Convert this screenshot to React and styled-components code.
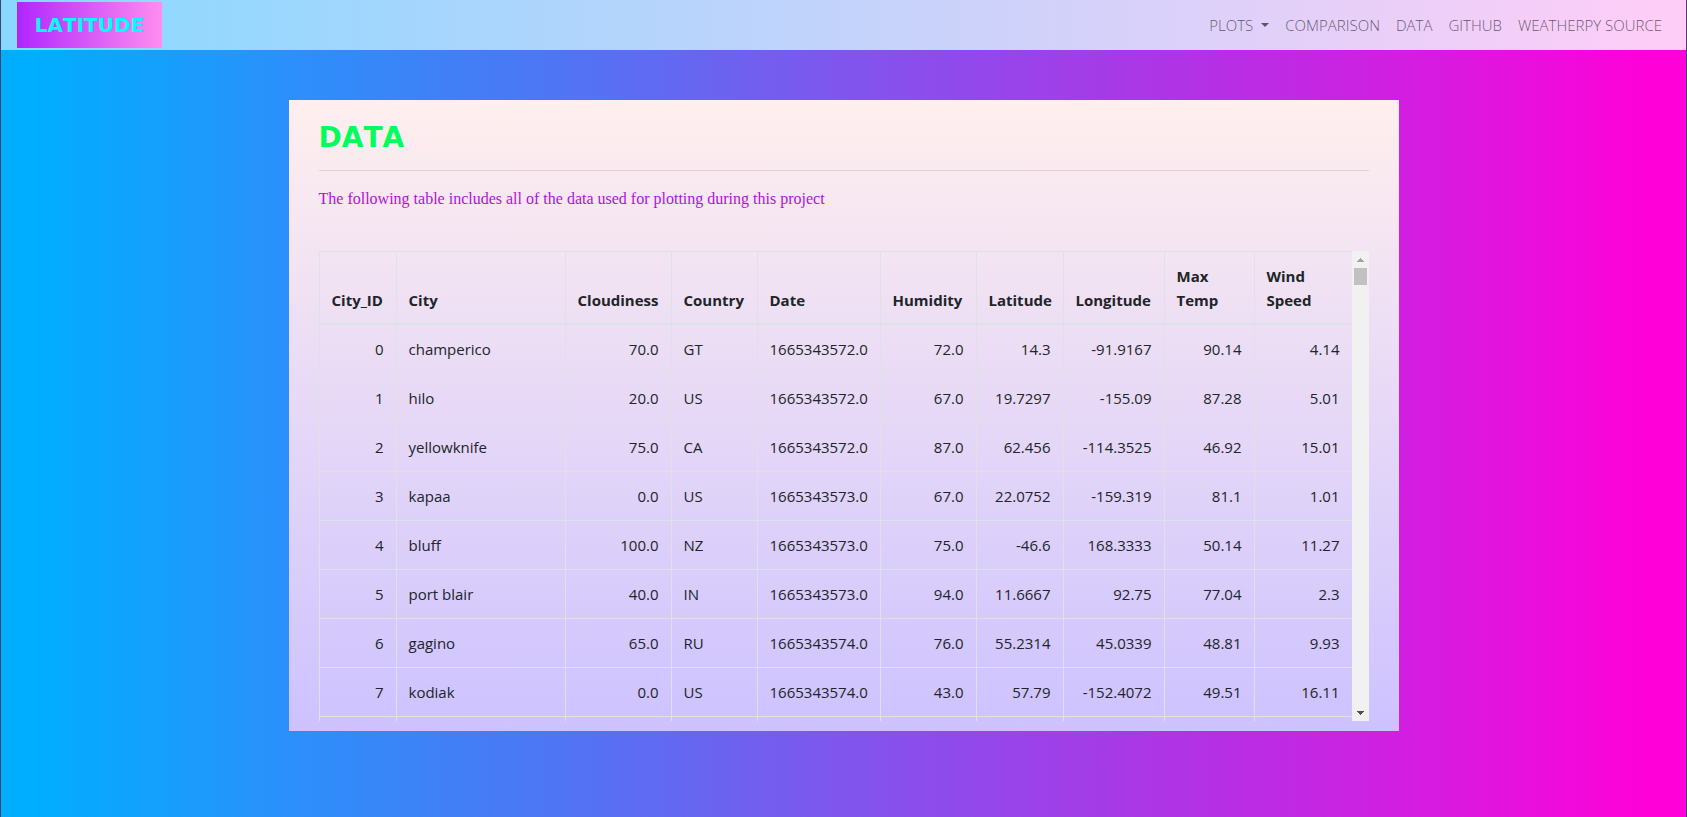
import React, { useRef } from "react";
import styled, { createGlobalStyle } from "styled-components";

const GlobalStyle = createGlobalStyle`
  *, *::before, *::after { box-sizing: border-box; }
  body {
    margin: 0;
    font-family: "Segoe UI", "Open Sans", "Noto Sans", sans-serif;
    font-size: 15px;
    line-height: 24px;
    color: #212529;
  }
`;

const Page = styled.div`
  min-height: 100vh;
  border: solid #45436b;
  border-width: 0 1px;
  background: linear-gradient(to right, #00aeff 2%, #2b90fb 17%, #4f75f4 33%, #8055ee 50%, #b530e5 72%, #d41de0 84%, #ff00d8 98%);
`;

const Navbar = styled.nav`
  display: flex;
  align-items: center;
  justify-content: space-between;
  height: 50px;
  padding: 0 16px;
  background: linear-gradient(to right, #87d9ff, #ffcdf7);
`;

const Brand = styled.a`
  min-width: 145px;
  padding: 8px 16px;
  background: linear-gradient(to right, #b026ff, #ff8df0);
  color: #00fdff;
  font-family: Verdana, "DejaVu Sans", sans-serif;
  font-size: 20px;
  font-weight: 700;
  font-kerning: none;
  line-height: 30px;
  text-align: center;
  text-decoration: none;
`;

const NavList = styled.ul`
  display: flex;
  margin: 0;
  padding: 0;
  list-style: none;
`;

const NavLink = styled.a`
  display: flex;
  align-items: center;
  gap: 8px;
  padding: 8px;
  color: rgba(0, 0, 0, 0.6);
  font-weight: 300;
  text-decoration: none;
`;

const Caret = styled.span`
  border: 4px solid transparent;
  border-top-color: currentColor;
  border-bottom: 0;
`;

const Card = styled.main`
  max-width: 1110px;
  margin: 50px auto 0;
  padding: 16px 30px 10px;
  background: linear-gradient(#ffefee, #cdc2ff);
`;

const Title = styled.h1`
  margin: 0;
  padding-bottom: 10px;
  border-bottom: 1px solid #e2d2d7;
  color: #00ff5a;
  font-family: Verdana, "DejaVu Sans", sans-serif;
  font-size: 28px;
  font-weight: 700;
  font-kerning: none;
  line-height: 44px;
`;

const Intro = styled.p`
  margin: 16px 0 40px;
  color: #ae12dc;
  font-family: "Times New Roman", "Liberation Serif", serif;
  font-size: 16px;
`;

const TableFrame = styled.div`
  display: flex;
  height: 470px;
`;

const TableScroll = styled.div`
  flex: 1;
  min-width: 0;
  overflow: auto;
  scrollbar-width: none;
`;

const DataTable = styled.table`
  width: 100%;
  table-layout: fixed;
  border-collapse: collapse;
`;

const HeadCell = styled.th`
  padding: 12px 12px 11px;
  border: 1px solid #dee2e6;
  border-bottom-width: 2px;
  text-align: left;
  vertical-align: bottom;
  font-weight: 700;
`;

const Cell = styled.td`
  height: 49px;
  padding: 12px;
  border: 1px solid #dee2e6;
  text-align: ${(p) => (p.$text ? "left" : "right")};
`;

const Scrollbar = styled.div`
  display: flex;
  flex-direction: column;
  width: 17px;
  background: #f1f1f1;
`;

const ScrollButton = styled.button`
  display: flex;
  align-items: center;
  justify-content: center;
  height: 17px;
  padding: 0;
  border: 0;
  background: none;
  color: ${(p) => (p.$dim ? "#a3a3a3" : "#505050")};
`;

const Thumb = styled.div`
  height: 17px;
  margin: 0 2px auto;
  background: #c1c1c1;
`;

const columns = [
  ["City_ID", 77],
  ["City", 169, true],
  ["Cloudiness", 106],
  ["Country", 86, true],
  ["Date", 123, true],
  ["Humidity", 96],
  ["Latitude", 87],
  ["Longitude", 101],
  ["Max Temp", 90],
  ["Wind Speed", 98],
];

const rows = [
  ["0", "champerico", "70.0", "GT", "1665343572.0", "72.0", "14.3", "-91.9167", "90.14", "4.14"],
  ["1", "hilo", "20.0", "US", "1665343572.0", "67.0", "19.7297", "-155.09", "87.28", "5.01"],
  ["2", "yellowknife", "75.0", "CA", "1665343572.0", "87.0", "62.456", "-114.3525", "46.92", "15.01"],
  ["3", "kapaa", "0.0", "US", "1665343573.0", "67.0", "22.0752", "-159.319", "81.1", "1.01"],
  ["4", "bluff", "100.0", "NZ", "1665343573.0", "75.0", "-46.6", "168.3333", "50.14", "11.27"],
  ["5", "port blair", "40.0", "IN", "1665343573.0", "94.0", "11.6667", "92.75", "77.04", "2.3"],
  ["6", "gagino", "65.0", "RU", "1665343574.0", "76.0", "55.2314", "45.0339", "48.81", "9.93"],
  ["7", "kodiak", "0.0", "US", "1665343574.0", "43.0", "57.79", "-152.4072", "49.51", "16.11"],
  ["", "", "", "", "", "", "", "", "", ""],
];

const links = ["COMPARISON", "DATA", "GITHUB", "WEATHERPY SOURCE"];

export default function App() {
  const scroller = useRef(null);
  const scroll = (top) => scroller.current.scrollBy({ top });

  return (
    <>
      <GlobalStyle />
      <Page>
        <Navbar>
          <Brand href="#">LATITUDE</Brand>
          <NavList>
            <li><NavLink href="#">PLOTS <Caret /></NavLink></li>
            {links.map((label) => (
              <li key={label}><NavLink href="#">{label}</NavLink></li>
            ))}
          </NavList>
        </Navbar>
        <Card>
          <Title>DATA</Title>
          <Intro>The following table includes all of the data used for plotting during this project</Intro>
          <TableFrame>
            <TableScroll ref={scroller}>
              <DataTable>
                <colgroup>
                  {columns.map(([name, width]) => <col key={name} width={width} />)}
                </colgroup>
                <thead>
                  <tr>{columns.map(([name]) => <HeadCell key={name} scope="col">{name}</HeadCell>)}</tr>
                </thead>
                <tbody>
                  {rows.map((row, r) => (
                    <tr key={r}>
                      {row.map((value, c) => <Cell key={c} $text={columns[c][2]}>{value}</Cell>)}
                    </tr>
                  ))}
                </tbody>
              </DataTable>
            </TableScroll>
            <Scrollbar>
              <ScrollButton $dim aria-label="Scroll up" onClick={() => scroll(-49)}>
                <svg width="7" height="4" fill="currentColor"><path d="M3 0h1v1h1v1h1v1h1v1H0V3h1V2h1V1h1z" /></svg>
              </ScrollButton>
              <Thumb />
              <ScrollButton aria-label="Scroll down" onClick={() => scroll(49)}>
                <svg width="7" height="4" fill="currentColor"><path d="M0 0h7v1H6v1H5v1H4v1H3V3H2V2H1V1H0z" /></svg>
              </ScrollButton>
            </Scrollbar>
          </TableFrame>
        </Card>
      </Page>
    </>
  );
}
